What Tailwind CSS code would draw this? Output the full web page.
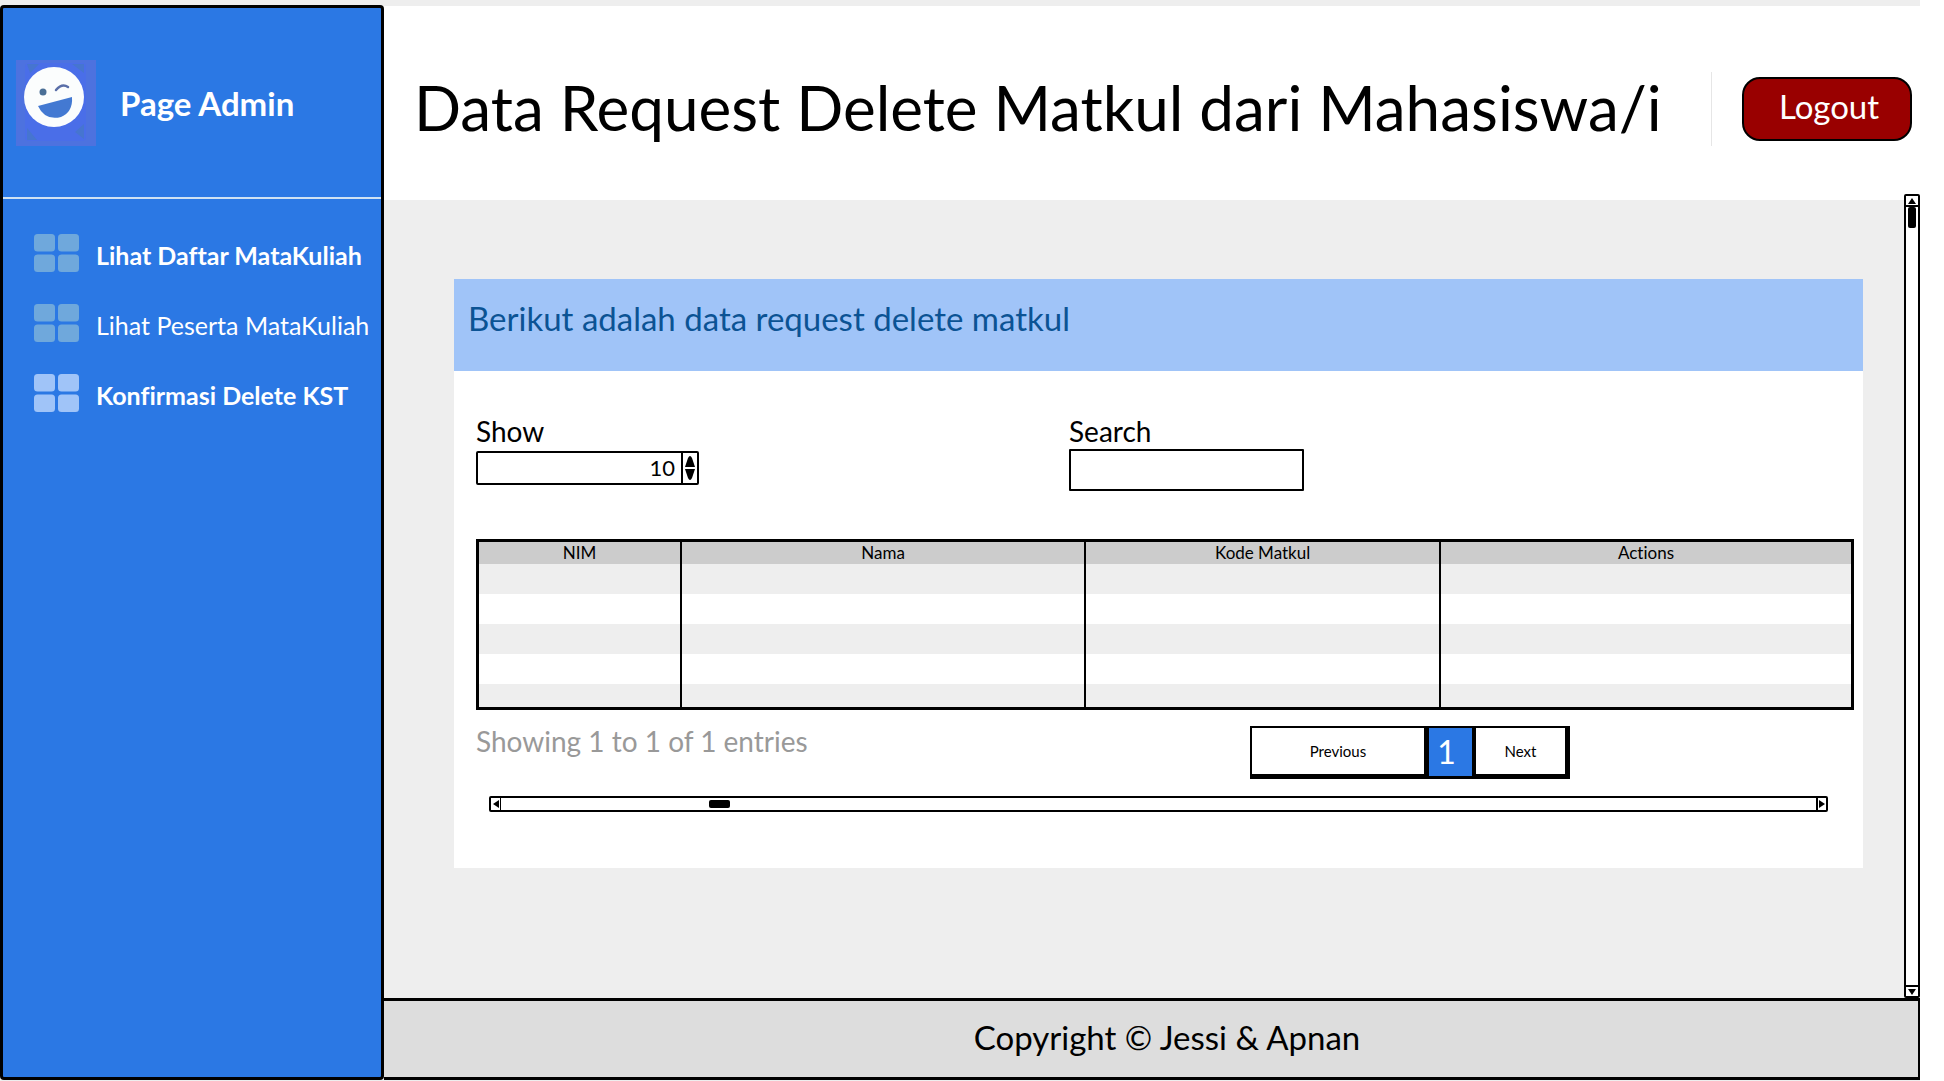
<!DOCTYPE html>
<html lang="id">
<head>
<meta charset="utf-8">
<meta name="viewport" content="width=device-width, initial-scale=1">
<title>Page Admin</title>
<script src="https://cdn.jsdelivr.net/npm/@tailwindcss/browser@4"></script>
</head>
<body class="min-h-screen bg-white pr-6 font-['Lato',sans-serif] text-black [font-variant-ligatures:none]">
<div class="flex min-h-screen bg-[#eeeeee] pt-[5px] pb-px">

  <!-- Sidebar -->
  <aside class="flex w-[384px] shrink-0 flex-col rounded-sm border-3 border-black bg-[#2b78e4] text-white">
    <div class="flex h-[191px] items-center gap-6 border-b-2 border-[#cfe2f3] pl-[13px]">
      <svg class="h-[86px] w-20" viewBox="0 0 80 86" role="img" aria-label="Avatar">
        <rect width="80" height="86" fill="#4d72df"/>
        <rect x="9" y="3" width="61" height="78" rx="4" fill="#4a6ee8"/>
        <path d="M11 4h12l-9 9zM56 4h12v9zM11 68l10 12H11zM68 64v15l-9-7z" fill="#4675d0"/>
        <circle cx="38" cy="37" r="30" fill="#fbfdfd"/>
        <circle cx="27" cy="32" r="3.5" fill="#4a6f96"/>
        <path d="M40 30q6-7 12-3" fill="none" stroke="#5a6fa8" stroke-width="2.5" stroke-linecap="round"/>
        <path d="M22 46L56 37Q57 52 45 57Q29 61 22 46Z" fill="#4379d2"/>
      </svg>
      <h2 class="text-[33px] leading-10 font-bold">Page Admin</h2>
    </div>
    <nav class="flex flex-col gap-[30px] pt-[35px] pl-[31px] text-[25px] leading-[38px] whitespace-nowrap">
      <a href="#daftar" class="flex gap-[17px] font-bold">
        <svg class="h-[38px] w-[45px] shrink-0" viewBox="0 0 45 38" fill="#6fa8dc"><rect width="21" height="17.500" rx="3.500"/><rect x="24" width="21" height="17.500" rx="3.500"/><rect y="20.500" width="21" height="17.500" rx="3.500"/><rect x="24" y="20.500" width="21" height="17.500" rx="3.500"/></svg>
        <span class="pt-0.5">Lihat Daftar MataKuliah</span>
      </a>
      <a href="#peserta" class="flex gap-[17px]">
        <svg class="h-[38px] w-[45px] shrink-0" viewBox="0 0 45 38" fill="#6fa8dc"><rect width="21" height="17.500" rx="3.500"/><rect x="24" width="21" height="17.500" rx="3.500"/><rect y="20.500" width="21" height="17.500" rx="3.500"/><rect x="24" y="20.500" width="21" height="17.500" rx="3.500"/></svg>
        <span class="pt-0.5">Lihat Peserta MataKuliah</span>
      </a>
      <a href="#konfirmasi" class="flex gap-[17px] font-bold" aria-current="page">
        <svg class="h-[38px] w-[45px] shrink-0" viewBox="0 0 45 38" fill="#a0c4f8"><rect width="21" height="17.500" rx="3.500"/><rect x="24" width="21" height="17.500" rx="3.500"/><rect y="20.500" width="21" height="17.500" rx="3.500"/><rect x="24" y="20.500" width="21" height="17.500" rx="3.500"/></svg>
        <span class="pt-0.5">Konfirmasi Delete KST</span>
      </a>
    </nav>
  </aside>

  <div class="flex min-w-0 flex-1 flex-col">
    <!-- Header -->
    <header class="mt-px flex h-[194px] items-center justify-between bg-white pt-3 pr-2 pl-[30px]">
      <h1 class="pb-1 text-[62px] leading-[72px] whitespace-nowrap">Data Request Delete Matkul dari Mahasiswa/i</h1>
      <div class="flex items-center gap-[30px]">
        <div class="h-[74px] w-px bg-[#e6e6e6]"></div>
        <button class="h-16 w-[170px] rounded-[18px] border-2 border-black bg-[#990000] pb-1.5 pl-1 text-[33px] leading-10 text-white">Logout</button>
      </div>
    </header>

    <!-- Content -->
    <main class="relative flex-1 pt-[79px] pr-[57px] pl-[70px]">
      <section class="h-[589px] bg-white">
        <h2 class="h-[92px] bg-[#a0c4f8] pt-[19px] pl-3.5 text-[33px] leading-10 text-[#0b5394]">Berikut adalah data request delete matkul</h2>

        <div class="pr-[9px] pl-[22px]">
          <form class="flex pt-[43px]">
            <div class="w-[593px]">
              <label for="show" class="block h-[37px] text-[28px] leading-[34px]">Show</label>
              <div class="flex h-[34px] w-[223px] rounded-[2px] border-2 border-black">
                <input id="show" type="number" value="10" class="min-w-0 flex-1 pr-1.5 text-right text-[22px] leading-[30px] outline-none [appearance:textfield] [&::-webkit-inner-spin-button]:appearance-none">
                <div class="flex w-4 flex-col items-center justify-center gap-0.5 border-l-2 border-black">
                  <button type="button" aria-label="Tambah"><svg class="h-3 w-2.5" viewBox="0 0 10 12"><path d="M0 12L3 3Q5-1 7 3L10 12Z"/></svg></button>
                  <button type="button" aria-label="Kurang"><svg class="h-3 w-2.5" viewBox="0 0 10 12"><path d="M0 0L3 9Q5 13 7 9L10 0Z"/></svg></button>
                </div>
              </div>
            </div>
            <div>
              <label for="search" class="block h-[35px] text-[28px] leading-[34px]">Search</label>
              <input id="search" type="text" class="h-[42px] w-[235px] rounded-[1px] border-[2px] border-black px-2 text-[22px] outline-none">
            </div>
          </form>

          <table class="mt-12 w-full table-fixed border-collapse border-3 border-black text-[17px] leading-5">
            <colgroup><col class="w-[14.8%]"><col class="w-[29.4%]"><col class="w-[25.8%]"><col class="w-[30%]"></colgroup>
            <thead>
              <tr class="h-[23px] bg-[#cccccc]">
                <th class="border-x-2 border-black p-0 font-normal">NIM</th>
                <th class="border-x-2 border-black p-0 font-normal">Nama</th>
                <th class="border-x-2 border-black p-0 font-normal">Kode Matkul</th>
                <th class="border-x-2 border-black p-0 font-normal">Actions</th>
              </tr>
            </thead>
            <tbody>
              <tr class="h-[30px] bg-[#eeeeee]"><td class="border-x-2 border-black"></td><td class="border-x-2 border-black"></td><td class="border-x-2 border-black"></td><td class="border-x-2 border-black"></td></tr>
              <tr class="h-[30px] bg-white"><td class="border-x-2 border-black"></td><td class="border-x-2 border-black"></td><td class="border-x-2 border-black"></td><td class="border-x-2 border-black"></td></tr>
              <tr class="h-[30px] bg-[#eeeeee]"><td class="border-x-2 border-black"></td><td class="border-x-2 border-black"></td><td class="border-x-2 border-black"></td><td class="border-x-2 border-black"></td></tr>
              <tr class="h-[30px] bg-white"><td class="border-x-2 border-black"></td><td class="border-x-2 border-black"></td><td class="border-x-2 border-black"></td><td class="border-x-2 border-black"></td></tr>
              <tr class="h-[25px] bg-[#eeeeee]"><td class="border-x-2 border-black"></td><td class="border-x-2 border-black"></td><td class="border-x-2 border-black"></td><td class="border-x-2 border-black"></td></tr>
            </tbody>
          </table>

          <div class="flex h-[69px] items-start pt-4">
            <p class="w-[774px] text-[28px] leading-[30px] text-[#999999]">Showing 1 to 1 of 1 entries</p>
            <div class="flex h-[53px] text-[15px] leading-5">
              <button class="w-44 border-2 border-b-[5px] border-black">Previous</button>
              <button class="w-12 border-2 border-b-[3px] border-l-[3px] border-black bg-[#2b78e4] pr-2 text-[32px] leading-10 text-white" aria-current="page">1</button>
              <button class="w-24 border-2 border-r-[5px] border-b-[5px] border-black">Next</button>
            </div>
          </div>

          <!-- Horizontal scroll bar -->
          <div class="mt-[17px] mr-[26px] ml-[13px] flex h-4 items-center rounded-[2px] border-2 border-black">
            <button aria-label="Geser kiri" class="flex h-3 w-2.5 items-center justify-center border-r border-black"><svg class="h-2 w-1.5" viewBox="0 0 6 8"><path d="M0 4L6 0V8Z"/></svg></button>
            <div class="flex-1 pl-[208px]"><div class="h-2 w-[21px] rounded-[2px] bg-black"></div></div>
            <button aria-label="Geser kanan" class="flex h-3 w-2.5 items-center justify-center border-l-2 border-black"><svg class="h-2 w-1.5" viewBox="0 0 6 8"><path d="M6 4L0 0V8Z"/></svg></button>
          </div>
        </div>
      </section>

      <!-- Vertical scroll bar, reaching slightly over the header -->
      <div class="absolute -top-1.5 right-0 bottom-0 flex w-4 flex-col items-center rounded-[2px] border-2 border-black bg-white">
        <button aria-label="Geser atas" class="flex h-[11px] w-3 items-center justify-center border-b-2 border-black"><svg class="h-1.5 w-2" viewBox="0 0 8 6"><path d="M4 0L8 6H0Z"/></svg></button>
        <div class="flex-1"><div class="h-[21px] w-2 rounded-[2px] bg-black"></div></div>
        <button aria-label="Geser bawah" class="flex h-[11px] w-3 items-center justify-center border-t-2 border-black"><svg class="h-1.5 w-2" viewBox="0 0 8 6"><path d="M4 6L0 0H8Z"/></svg></button>
      </div>
    </main>

    <!-- Footer -->
    <footer class="flex h-[82px] items-center justify-center border-y-3 border-r-2 border-black bg-[#dddddd] pb-1 pl-8 text-[33px] leading-10">Copyright © Jessi &amp; Apnan</footer>
  </div>
</div>
</body>
</html>
